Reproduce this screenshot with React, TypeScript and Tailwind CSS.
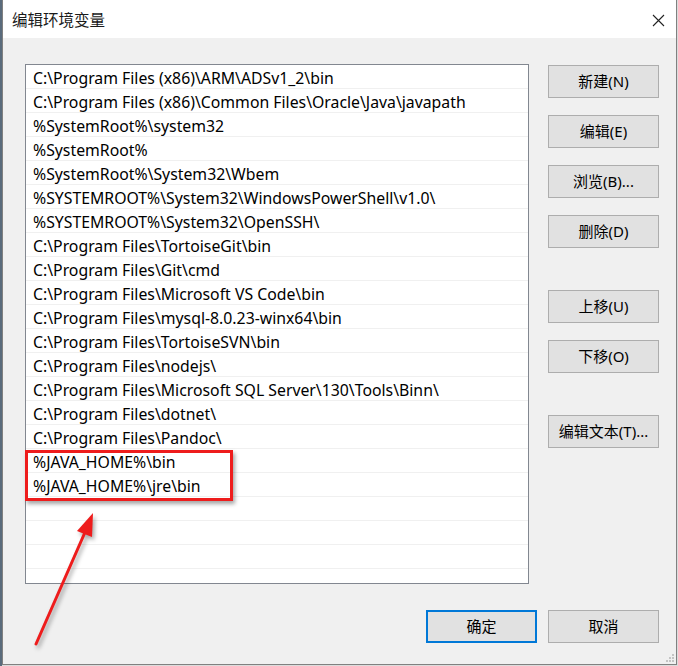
import React from "react";

const paths = [
  "C:\\Program Files (x86)\\ARM\\ADSv1_2\\bin",
  "C:\\Program Files (x86)\\Common Files\\Oracle\\Java\\javapath",
  "%SystemRoot%\\system32",
  "%SystemRoot%",
  "%SystemRoot%\\System32\\Wbem",
  "%SYSTEMROOT%\\System32\\WindowsPowerShell\\v1.0\\",
  "%SYSTEMROOT%\\System32\\OpenSSH\\",
  "C:\\Program Files\\TortoiseGit\\bin",
  "C:\\Program Files\\Git\\cmd",
  "C:\\Program Files\\Microsoft VS Code\\bin",
  "C:\\Program Files\\mysql-8.0.23-winx64\\bin",
  "C:\\Program Files\\TortoiseSVN\\bin",
  "C:\\Program Files\\nodejs\\",
  "C:\\Program Files\\Microsoft SQL Server\\130\\Tools\\Binn\\",
  "C:\\Program Files\\dotnet\\",
  "C:\\Program Files\\Pandoc\\",
  "%JAVA_HOME%\\bin",
  "%JAVA_HOME%\\jre\\bin",
  "",
  "",
  "",
];

const font = { fontFamily: '"Noto Sans", "Noto Sans CJK SC", sans-serif' };

function Btn({ label, className = "" }: { label: string; className?: string }) {
  return (
    <div
      className={
        "w-[111px] h-[33px] flex items-center justify-center bg-[#e1e1e1] border border-[#adadad] text-[15px] text-black " +
        className
      }
    >
      {label}
    </div>
  );
}

export default function App() {
  return (
    <div className="w-[678px] h-[666px] flex bg-[#dcdcdc] overflow-hidden" style={font}>
      <div className="w-[2px] h-full bg-[#5a6b7c]" />
      <div className="w-[675px] h-[665px] flex flex-col border-l border-r border-b border-[#808080] relative">
        <div className="h-[38px] bg-white flex items-center justify-between pl-[9px] pr-[11px] pt-[3px]">
          <span className="text-[15.5px] text-[#1a1a1a]">编辑环境变量</span>
          <svg width="13" height="13" viewBox="0 0 13 13">
            <path d="M1 1 L12 12 M12 1 L1 12" stroke="#222" strokeWidth="1.1" />
          </svg>
        </div>
        <div className="flex-1 bg-[#f0f0f0] flex flex-col pl-[22px] pt-[26px]">
          <div className="flex">
            <div className="w-[504px] h-[520px] bg-white border border-[#828790] flex flex-col overflow-hidden">
              {paths.map((p, i) => (
                <div
                  key={i}
                  className="h-[24px] shrink-0 border-b border-[#f0f0f0] flex items-center pl-[7px] pt-[4px] text-[15.8px] leading-none text-black whitespace-nowrap"
                >
                  {p}
                </div>
              ))}
            </div>
            <div className="flex flex-col ml-[19px] mt-[1px]">
              <Btn label="新建(N)" />
              <Btn label="编辑(E)" className="mt-[17px]" />
              <Btn label="浏览(B)..." className="mt-[17px]" />
              <Btn label="删除(D)" className="mt-[17px]" />
              <Btn label="上移(U)" className="mt-[42px]" />
              <Btn label="下移(O)" className="mt-[17px]" />
              <Btn label="编辑文本(T)..." className="mt-[42px]" />
            </div>
          </div>
          <div className="flex justify-end gap-[11px] mt-[26px] pr-[17px]">
            <div className="w-[111px] h-[33px] flex items-center justify-center bg-[#e1e1e1] border-2 border-[#0078d7] text-[15px] text-black">
              确定
            </div>
            <Btn label="取消" />
          </div>
        </div>
        {/* resize grip */}
        <div className="absolute right-[1px] bottom-[1px] w-[10px] h-[10px]">
          <svg width="10" height="10" viewBox="0 0 10 10">
            <rect x="7" y="1" width="2" height="2" fill="#c4c4c4" />
            <rect x="4" y="4" width="2" height="2" fill="#c4c4c4" />
            <rect x="7" y="4" width="2" height="2" fill="#c4c4c4" />
            <rect x="1" y="7" width="2" height="2" fill="#c4c4c4" />
            <rect x="4" y="7" width="2" height="2" fill="#c4c4c4" />
            <rect x="7" y="7" width="2" height="2" fill="#c4c4c4" />
          </svg>
        </div>
      </div>
      {/* annotation overlay */}
      <div className="absolute left-[25px] top-[450px] w-[208px] h-[51px] border-[3px] border-[#ee1c1c] shadow-[2px_3px_4px_rgba(0,0,0,0.35)]" />
      <svg
        className="absolute left-0 top-0"
        width="678"
        height="666"
        viewBox="0 0 678 666"
        style={{ filter: "drop-shadow(2px 3px 2px rgba(0,0,0,0.35))", pointerEvents: "none" }}
      >
        <line x1="36" y1="644" x2="86" y2="530" stroke="#ee1c1c" strokeWidth="3" strokeLinecap="round" />
        <polygon points="93,513 77,531 92,537" fill="#ee1c1c" />
      </svg>
    </div>
  );
}
